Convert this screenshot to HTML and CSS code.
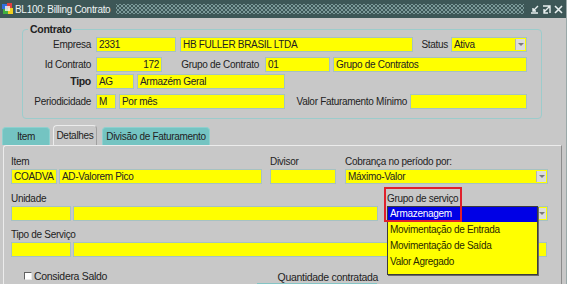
FILE: index.html
```html
<!DOCTYPE html>
<html lang="pt">
<head>
    <meta charset="UTF-8">
    <title>BL100: Billing Contrato</title>
    <link rel="stylesheet" href="styles.css">
</head>
<body>
<div class="window">
    <div class="titlebar">
        <svg class="app-icon" width="11" height="12" viewBox="0 0 11 12">
            <rect x="0" y="1" width="5" height="5" fill="#3070e0"/>
            <rect x="5" y="0" width="5" height="5" fill="#e04040"/>
            <rect x="1" y="6" width="5" height="5" fill="#40b040"/>
            <rect x="6" y="5" width="5" height="6" fill="#f0d020"/>
            <rect x="3" y="3" width="5" height="5" fill="#f4f4f4" opacity="0.8"/>
        </svg>
        <span class="title">BL100: Billing Contrato</span>
        <div class="dots"></div>
        <div class="win-btns">
            <svg width="9" height="9" viewBox="0 0 9 9"><path d="M1 8h7M8 1L3 6M3 3v3h3" stroke="#e8f0f0" stroke-width="1.4" fill="none"/></svg>
            <svg width="9" height="9" viewBox="0 0 9 9"><path d="M1 1h7v7M8 1L2 7M2 4v4h4" stroke="#e8f0f0" stroke-width="1.4" fill="none"/></svg>
            <svg width="9" height="9" viewBox="0 0 9 9"><path d="M1 1l7 7M8 1L1 8" stroke="#e8f0f0" stroke-width="1.6" fill="none"/></svg>
        </div>
    </div>

    <fieldset class="contrato">
        <legend>Contrato</legend>
        <div class="row r-top">
            <span class="lbl">Empresa</span>
            <div class="fld w80">2331</div>
            <div class="fld w233 ml4">HB FULLER BRASIL LTDA</div>
            <span class="lbl-in w38">Status</span>
            <div class="fld sel w76"><span class="val">Ativa</span><span class="arrow"></span></div>
        </div>
        <div class="row r-gap">
            <span class="lbl">Id Contrato</span>
            <div class="fld w66 num">172</div>
            <span class="lbl-in w103 pr6">Grupo de Contrato</span>
            <div class="fld w65">01</div>
            <div class="fld w194 ml3">Grupo de Contratos</div>
        </div>
        <div class="row r-top">
            <span class="lbl bold">Tipo</span>
            <div class="fld w38">AG</div>
            <div class="fld w148 ml3">Armazém Geral</div>
        </div>
        <div class="row r-gap">
            <span class="lbl">Periodicidade</span>
            <div class="fld w20">M</div>
            <div class="fld w166 ml3">Por mês</div>
            <span class="lbl-in w125">Valor Faturamento Mínimo</span>
            <div class="fld w117"></div>
        </div>
    </fieldset>

    <div class="tabs">
        <div class="tab t-item">Item</div>
        <div class="tab active t-det">Detalhes</div>
        <div class="tab t-div">Divisão de Faturamento</div>
    </div>

    <div class="panel">
        <div class="prow pr-a">
            <div class="block">
                <span class="cap">Item</span>
                <div class="fields">
                    <div class="fld w46">COADVA</div>
                    <div class="fld w203 ml2">AD-Valorem Pico</div>
                </div>
            </div>
            <div class="block ml8">
                <span class="cap">Divisor</span>
                <div class="fields"><div class="fld w66"></div></div>
            </div>
            <div class="block ml9">
                <span class="cap">Cobrança no período por:</span>
                <div class="fields"><div class="fld sel w203"><span class="val">Máximo-Valor</span><span class="arrow"></span></div></div>
            </div>
        </div>

        <div class="prow pr-b">
            <div class="block">
                <span class="cap">Unidade</span>
                <div class="fields">
                    <div class="fld w60"></div>
                    <div class="fld w305 ml2"></div>
                </div>
            </div>
            <div class="block grupo ml9">
                <span class="cap">Grupo de serviço</span>
                <div class="fields">
                    <div class="fld sel w161 open"><span class="val"></span><span class="arrow"></span>
                        <ul class="droplist">
                            <li class="hl">Armazenagem</li>
                            <li>Movimentação de Entrada</li>
                            <li>Movimentação de Saída</li>
                            <li>Valor Agregado</li>
                        </ul>
                    </div>
                </div>
                <div class="redbox"></div>
            </div>
        </div>

        <div class="prow pr-c">
            <div class="block">
                <span class="cap">Tipo de Serviço</span>
                <div class="fields">
                    <div class="fld w60"></div>
                    <div class="fld w474 ml2"></div>
                </div>
            </div>
        </div>

        <div class="prow pr-d">
            <div class="check"><span class="box"></span>Considera Saldo</div>
            <div class="qtd">
                <span class="cap">Quantidade contratada</span>
                <div class="fld w120"></div>
            </div>
        </div>
    </div>
</div>
</body>
</html>
```

FILE: styles.css
```css
body{
    margin: 0;
    background: #c8c8c8;
    font-family: "Liberation Sans", Arial, sans-serif;
    font-size: 10px;
    letter-spacing: -0.3px;
    color: #222;
}
.window{
    width: 567px;
    height: 284px;
    overflow: hidden;
    background: #c8c8c8;
    box-sizing: border-box;
    border-right: 1px solid #9aa8a8;
}

/* title bar */
.titlebar{
    height: 18px;
    background: #3d5757;
    display: flex;
    align-items: center;
}
.app-icon{
    margin-left: 2px;
}
.title{
    color: #eef4f4;
    margin-left: 2px;
    font-size: 10px;
    white-space: nowrap;
}
.dots{
    flex: 1;
    height: 10px;
    margin: 0 6px 0 6px;
    background-image: radial-gradient(circle, #7c9a9a 0.9px, transparent 1.1px),
        radial-gradient(circle, #7c9a9a 0.9px, transparent 1.1px);
    background-size: 4px 4px;
    background-position: 0 0, 2px 2px;
}
.win-btns{
    display: flex;
    gap: 3px;
    margin-right: 3px;
}

/* contrato frame */
.contrato{
    margin: 5px 0 0 22px;
    padding: 0 0 9px 0;
    width: 520px;
    box-sizing: border-box;
    border: 1px solid #9ccccc;
    border-radius: 4px;
    min-inline-size: 0;
}
.contrato legend{
    margin-left: 5px;
    padding: 0 2px;
    font-weight: bold;
    font-size: 10.5px;
    line-height: 12px;
}
.row{
    display: flex;
    height: 15px;
}
.r-top{ margin-top: 2px; }
.r-gap{ margin-top: 5px; }
.lbl{
    width: 73px;
    box-sizing: border-box;
    padding-right: 5px;
    text-align: right;
    line-height: 15px;
    white-space: nowrap;
}
.lbl.bold{
    font-weight: bold;
    font-size: 10.5px;
}
.lbl-in{
    box-sizing: border-box;
    padding-right: 3px;
    text-align: right;
    line-height: 15px;
    white-space: nowrap;
}
.pr6{ padding-right: 6px; }

.fld{
    height: 15px;
    box-sizing: border-box;
    border: 1px solid #a6c2c2;
    background: #ffff00;
    padding: 0 2px;
    line-height: 13px;
    white-space: nowrap;
    overflow: hidden;
    flex: none;
}
.fld.num{ text-align: right; }
.sel{
    display: flex;
    padding-right: 1px;
}
.sel .val{ flex: 1; }
.arrow{
    width: 9px;
    height: 11px;
    margin-top: 1px;
    background: #dcdcdc;
    border-left: 1px solid #b4b4b4;
    display: flex;
    align-items: center;
    justify-content: center;
}
.arrow::after{
    content: "";
    border-left: 3px solid transparent;
    border-right: 3px solid transparent;
    border-top: 3px solid #7a7a7a;
}

.w20{ width: 20px; }
.w38{ width: 38px; }
.w46{ width: 46px; }
.w60{ width: 60px; }
.w65{ width: 65px; }
.w66{ width: 66px; }
.w76{ width: 76px; }
.w80{ width: 80px; }
.w103{ width: 103px; }
.w117{ width: 117px; }
.w120{ width: 120px; }
.w125{ width: 125px; }
.w148{ width: 148px; }
.w161{ width: 161px; }
.w166{ width: 166px; }
.w194{ width: 194px; }
.w203{ width: 203px; }
.w233{ width: 233px; }
.w305{ width: 305px; }
.w474{ width: 474px; }
.ml2{ margin-left: 2px; }
.ml3{ margin-left: 3px; }
.ml4{ margin-left: 4px; }
.ml8{ margin-left: 8px; }
.ml9{ margin-left: 9px; }

/* tabs */
.tabs{
    display: flex;
    align-items: flex-end;
    height: 20px;
    margin-top: 6px;
    padding-left: 2px;
}
.tab{
    height: 18px;
    box-sizing: border-box;
    background: #74c4c2;
    border: 1px solid #8ed0ce;
    border-bottom: none;
    border-radius: 4px 4px 0 0;
    text-align: center;
    line-height: 17px;
    white-space: nowrap;
}
.t-item{ width: 48px; }
.t-det{ width: 44px; margin-left: 3px; }
.t-div{ width: 108px; margin-left: 5px; }
.tab.active{
    height: 20px;
    line-height: 20px;
    background: #c8c8c8;
    border-color: #ececec #a0a0a0 #c8c8c8 #ececec;
}

/* detail panel */
.panel{
    margin-left: 3px;
    width: 559px;
    height: 200px;
    box-sizing: border-box;
    border-top: 1px solid #ececec;
    border-left: 1px solid #ececec;
    border-right: 1px solid #8c8c8c;
    border-radius: 3px 0 0 0;
    padding: 10px 0 0 7px;
}
.prow{
    display: flex;
}
.pr-b{ margin-top: 9px; }
.pr-c{ margin-top: 8px; }
.pr-d{ margin-top: 13px; }
.block{
    display: flex;
    flex-direction: column;
}
.cap{
    line-height: 12px;
    height: 12px;
    white-space: nowrap;
}
.fields{
    display: flex;
    margin-top: 1px;
}

.grupo{
    position: relative;
}
.cap + .fields .open{
    position: relative;
    overflow: visible;
}
.droplist{
    position: absolute;
    left: -1px;
    top: -1px;
    width: 151px;
    height: 69px;
    margin: 0;
    padding: 0;
    list-style: none;
    box-sizing: border-box;
    background: #ffff00;
    border: 1px solid #3c3c3c;
    box-shadow: 1px 1px 0 #6a6a6a;
    z-index: 2;
}
.droplist li{
    height: 16px;
    line-height: 16px;
    padding-left: 2px;
    color: #2a2a00;
}
.droplist li.hl{
    height: 15px;
    line-height: 14px;
    background: #0000e6;
    color: #ffffff;
}
.redbox{
    position: absolute;
    left: -3px;
    top: -6px;
    width: 78px;
    height: 35px;
    box-sizing: border-box;
    border: 2px solid #e0202c;
    z-index: 3;
}

.check{
    display: flex;
    align-items: center;
    margin-left: 13px;
    height: 12px;
    line-height: 12px;
    font-size: 10.5px;
}
.check .box{
    width: 6px;
    height: 6px;
    background: #fff;
    border-top: 1px solid #606060;
    border-left: 1px solid #606060;
    border-right: 1px solid #e8e8e8;
    border-bottom: 1px solid #e8e8e8;
    margin-right: 2px;
}
.qtd{
    display: flex;
    flex-direction: column;
    align-items: flex-end;
    margin-left: 150px;
    margin-top: 1px;
}
.qtd .cap{
    margin-right: -1px;
    font-size: 10.5px;
}
.qtd .fld{
    margin-top: 0;
    background: #c8c8c8;
    border-color: #84c4c4;
}
```
